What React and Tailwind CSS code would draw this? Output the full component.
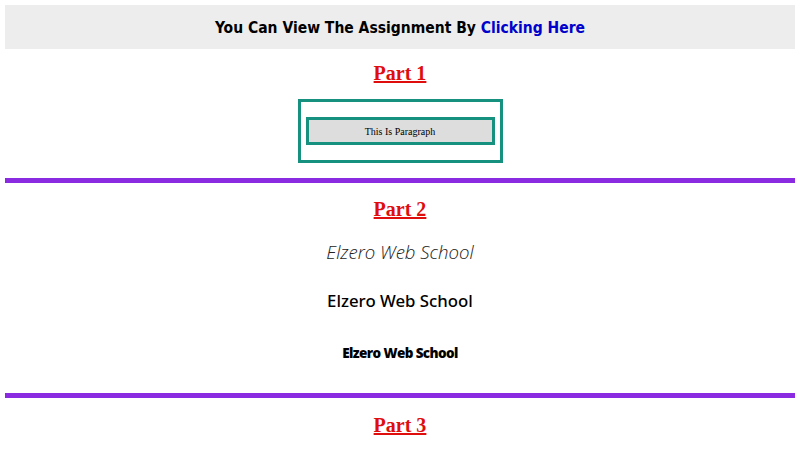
export default function App() {
  return (
    <div className="w-[800px] h-[450px] overflow-hidden bg-white px-[5px] pt-[5px]">
      <div className="h-[44px] pt-[4px] bg-[#ededed] flex items-center justify-center">
        <h1 className="text-[15.5px] font-bold text-black [font-family:'DejaVu_Sans_Condensed','DejaVu_Sans',sans-serif]">
          You Can View The Assignment By <a className="text-[#0000cc]">Clicking Here</a>
        </h1>
      </div>

      <div className="h-[48px] flex items-center justify-center">
        <h2 className="text-[20px] font-bold text-[#e00d0d] underline [font-family:'Liberation_Serif',serif]">Part 1</h2>
      </div>
      <div className="mt-[2px] flex justify-center">
        <div className="w-[205px] border-[3px] border-[#16917f] px-[5px] py-[15px]">
          <p className="h-[28px] border-[3px] border-[#16917f] bg-[#dddddd] flex items-center justify-center text-[10px] text-black [font-family:'Liberation_Serif',serif]">
            This Is Paragraph
          </p>
        </div>
      </div>

      <hr className="mt-[15px] h-[5px] border-0 bg-[#8a2be2]" />

      <div className="h-[51px] flex items-center justify-center">
        <h2 className="text-[20px] font-bold text-[#e00d0d] underline [font-family:'Liberation_Serif',serif]">Part 2</h2>
      </div>
      <div className="h-[36px] flex items-center justify-center">
        <p className="text-[18.6px] italic font-light text-[#222] [font-family:'Open_Sans',sans-serif]">Elzero Web School</p>
      </div>
      <div className="h-[61px] flex items-center justify-center">
        <p className="text-[16.8px] font-medium text-black [font-family:'Noto_Sans',sans-serif]">Elzero Web School</p>
      </div>
      <div className="h-[44px] flex items-center justify-center">
        <p className="text-[13.5px] font-extrabold tracking-[-0.6px] text-black [font-family:'Open_Sans',sans-serif]">Elzero Web School</p>
      </div>

      <hr className="mt-[18px] h-[5px] border-0 bg-[#8a2be2]" />

      <div className="h-[54px] flex items-center justify-center">
        <h2 className="text-[20px] font-bold text-[#e00d0d] underline [font-family:'Liberation_Serif',serif]">Part 3</h2>
      </div>
    </div>
  );
}
